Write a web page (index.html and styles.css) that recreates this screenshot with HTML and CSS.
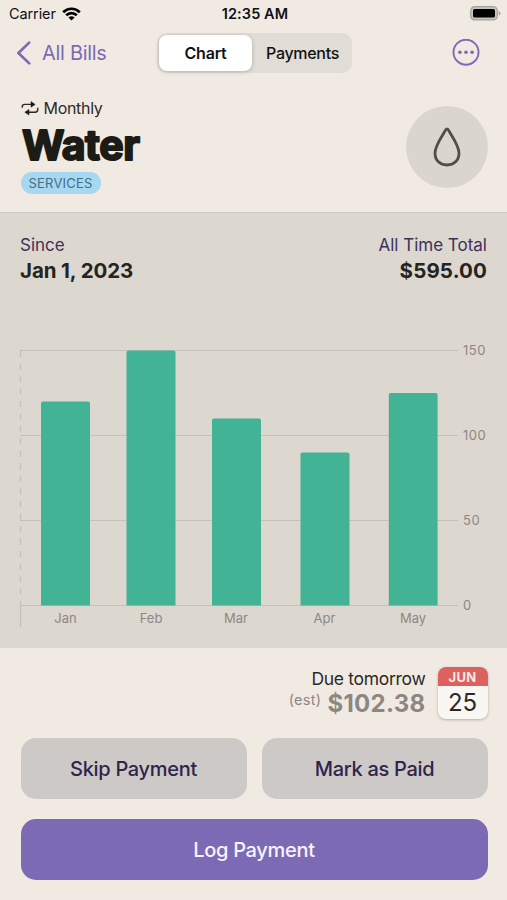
FILE: index.html
```html
<!DOCTYPE html>
<html lang="en">
  <head>
    <meta charset="utf-8" />
    <title>Water</title>
    <link rel="stylesheet" href="styles.css">
  </head>

  <body>
    <div class="status-bar">
      <div class="carrier">
        <span>Carrier</span>
        <svg width="19" height="14" viewBox="0 0 19 14" fill="none" stroke="#000" stroke-width="2.7">
          <path d="M1.2 5.2 C5.8 0.6 13.2 0.6 17.8 5.2" />
          <path d="M4.2 8.3 C7.2 5.4 11.8 5.4 14.8 8.3" />
          <path d="M6.5 10.5 C8.1 8.9 10.9 8.9 12.5 10.5 L9.5 13.5 Z" fill="#000" stroke="none" />
        </svg>
      </div>
      <span class="time">12:35 AM</span>
      <svg class="battery" width="31" height="15" viewBox="0 0 31 15">
        <rect x="0.7" y="0.7" width="26.6" height="13.2" rx="4" fill="#c9c5bb" stroke="#a5a198" stroke-width="1.2" />
        <rect x="3" y="3" width="22" height="8.6" rx="1.5" fill="#000" />
        <path d="M28.7 5 Q30.4 5.6 30.4 7.3 Q30.4 9 28.7 9.6 Z" fill="#a5a198" />
      </svg>
    </div>

    <div class="nav">
      <a class="back" href="#">
        <svg width="15" height="24" viewBox="0 0 15 24" fill="none" stroke="#7c6ab5" stroke-width="2.7" stroke-linecap="round" stroke-linejoin="round">
          <path d="M13.2 1.6 L2.4 12 L13.2 22.4" />
        </svg>
        <span>All Bills</span>
      </a>
      <div class="segments">
        <div class="segment active">Chart</div>
        <div class="segment">Payments</div>
      </div>
      <svg class="more" width="28" height="28" viewBox="0 0 28 28">
        <circle cx="14" cy="13.2" r="12.5" fill="none" stroke="#7c6ab5" stroke-width="1.9" />
        <g fill="#7c6ab5">
          <circle cx="7.9" cy="13.2" r="1.8" />
          <circle cx="14" cy="13.2" r="1.8" />
          <circle cx="20.1" cy="13.2" r="1.8" />
        </g>
      </svg>
    </div>

    <div class="bill">
      <div class="bill-info">
        <div class="repeat">
          <svg width="18" height="15" viewBox="0 0 18 15">
            <g fill="none" stroke="#2c2a26" stroke-width="1.4" stroke-linecap="round">
              <path d="M1.2 6.3 V6 Q1.2 3.4 3.8 3.4 H10.5" />
              <path d="M16.8 7.2 V8.2 Q16.8 11.2 14 11.2 H7" />
            </g>
            <path d="M10 0.6 L14.2 3.4 L10 6.2 Z M8 8.4 L3.8 11.2 L8 14 Z" fill="#1c1b18" stroke="#1c1b18" stroke-width="0.5" stroke-linejoin="round" />
          </svg>
          <span>Monthly</span>
        </div>
        <h1>
          <svg class="title" width="130" height="53">
            <text x="1" y="41" textLength="118" lengthAdjust="spacing">Water</text>
          </svg>
        </h1>
        <div class="tag">SERVICES</div>
      </div>
      <div class="bill-icon">
        <svg width="28" height="40" viewBox="0 0 28 40" fill="none" stroke="#504e49" stroke-width="2.8" stroke-linejoin="round">
          <path d="M14 2 C12.9 2 12.4 3.3 11.6 4.8 C7.2 12 2 19.5 2 26.3 C2 33.4 7 38 14 38 C21 38 26 33.4 26 26.3 C26 19.5 20.8 12 16.4 4.8 C15.6 3.3 15.1 2 14 2 Z" />
        </svg>
      </div>
    </div>

    <div class="stats">
      <div class="totals">
        <div>
          <div class="label">Since</div>
          <div class="value since">Jan 1, 2023</div>
        </div>
        <div class="right">
          <div class="label">All Time Total</div>
          <div class="value">$595.00</div>
        </div>
      </div>

      <svg class="chart" width="507" height="290" viewBox="0 340 507 290">
        <g stroke="#c5c0b8" stroke-width="1.2">
          <path d="M20 350.5 H458 M20 435.5 H458 M20 520.5 H458 M20 605.5 H458" />
          <path d="M20.5 351 V605" stroke-dasharray="6 6.5" />
          <path d="M20.5 605 V627" />
        </g>
        <g fill="#43b395">
          <path d="M41 605.5 V403.5 Q41 401.5 43 401.5 H88 Q90 401.5 90 403.5 V605.5 Z" />
          <path d="M126.5 605.5 V352.5 Q126.5 350.5 128.5 350.5 H173.5 Q175.5 350.5 175.5 352.5 V605.5 Z" />
          <path d="M212 605.5 V420.5 Q212 418.5 214 418.5 H259 Q261 418.5 261 420.5 V605.5 Z" />
          <path d="M300.5 605.5 V454.5 Q300.5 452.5 302.5 452.5 H347.5 Q349.5 452.5 349.5 454.5 V605.5 Z" />
          <path d="M388.8 605.5 V395 Q388.8 393 390.8 393 H435.6 Q437.6 393 437.6 395 V605.5 Z" />
        </g>
        <g class="months">
          <text x="65.5" y="623">Jan</text>
          <text x="151" y="623">Feb</text>
          <text x="236" y="623">Mar</text>
          <text x="324.5" y="623">Apr</text>
          <text x="413" y="623">May</text>
        </g>
        <g class="amounts">
          <text x="463" y="355">150</text>
          <text x="463" y="440">100</text>
          <text x="463" y="525">50</text>
          <text x="463" y="610">0</text>
        </g>
      </svg>
    </div>

    <div class="footer">
      <div class="due">
        <div class="due-text">
          <div class="due-when">Due tomorrow</div>
          <div class="due-amount">
            <span class="est">(est)</span>
            <span class="amount">$102.38</span>
          </div>
        </div>
        <div class="calendar">
          <div class="month">JUN</div>
          <div class="day">25</div>
        </div>
      </div>
      <div class="buttons">
        <button class="button">Skip Payment</button>
        <button class="button">Mark as Paid</button>
        <button class="button primary">Log Payment</button>
      </div>
    </div>
  </body>
</html>
```
FILE: styles.css
```css
* {
  box-sizing: border-box;
}

body {
  margin: 0;
  width: 507px;
  height: 900px;
  overflow: hidden;
  display: flex;
  flex-direction: column;
  font-family: Inter, "Liberation Sans", sans-serif;
  color: #2c2a26;
  background-color: #f1eae3;
  white-space: nowrap;
}

.status-bar {
  height: 27px;
  padding: 0 6px 0 9px;
  display: grid;
  grid-template-columns: 1fr auto 1fr;
  align-items: center;
  font-size: 14.5px;
  color: #111;
}

.carrier {
  display: flex;
  align-items: center;
  gap: 6px;
  letter-spacing: -0.1px;
}

.time {
  font-weight: 600;
  letter-spacing: 0.1px;
}

.battery {
  justify-self: end;
}

.nav {
  height: 52px;
  padding: 0 27px 0 16px;
  display: grid;
  grid-template-columns: 141px 195px 1fr;
  align-items: center;
}

.back {
  display: flex;
  align-items: center;
  gap: 11px;
  font-size: 20px;
  letter-spacing: -0.3px;
  color: #7c6ab5;
  text-decoration: none;
}

.segments {
  height: 40px;
  padding: 2px;
  display: grid;
  grid-template-columns: 93px 1fr;
  border-radius: 10px;
  background-color: #e1dcd6;
}

.segment {
  padding-left: 3px;
  display: flex;
  align-items: center;
  justify-content: center;
  font-size: 16px;
  font-weight: 500;
  letter-spacing: -0.3px;
  color: #111;
}

.segment.active {
  padding-left: 0;
  font-weight: 600;
  letter-spacing: -0.2px;
  border-radius: 8px;
  background-color: #fff;
  box-shadow: 0 1px 4px rgba(0, 0, 0, 0.2);
}

.more {
  justify-self: end;
}

.bill {
  height: 133px;
  padding: 18px 19.5px 0 20.5px;
  display: flex;
  justify-content: space-between;
}

.repeat {
  height: 22px;
  display: flex;
  align-items: center;
  gap: 5px;
  font-size: 16px;
  letter-spacing: -0.3px;
}

.bill h1 {
  margin: 0;
  height: 53px;
}

.title {
  display: block;
}

/* round joins soften the corners of the heading letters */
.title text {
  font-size: 41px;
  font-weight: 700;
  fill: #1c1b15;
  stroke: #1c1b15;
  stroke-width: 2px;
  stroke-linejoin: round;
}

.tag {
  width: 80px;
  height: 22px;
  border-radius: 11px;
  font-size: 13px;
  line-height: 22px;
  letter-spacing: 0.2px;
  text-align: center;
  color: #426f87;
  background-color: #a6d8f1;
}

.bill-icon {
  width: 82px;
  height: 82px;
  margin-top: 9px;
  display: flex;
  align-items: center;
  justify-content: center;
  border-radius: 50%;
  background-color: #dad5cf;
}

.stats {
  height: 436px;
  border-top: 1px solid #d0cbc4;
  background-color: #dcd7cf;
}

.totals {
  height: 127px;
  padding: 19px 20px 0;
  display: flex;
  justify-content: space-between;
}

.right {
  text-align: right;
}

.label {
  font-size: 17px;
  line-height: 26px;
  color: #3c315c;
}

.value {
  font-size: 20.5px;
  line-height: 26px;
  font-weight: 700;
  letter-spacing: 0.15px;
  color: #25241f;
}

.value.since {
  letter-spacing: -0.1px;
}

.chart {
  display: block;
}

.chart text {
  font-size: 13px;
  fill: #8c8881;
}

.amounts text {
  letter-spacing: 0.5px;
}

.months {
  text-anchor: middle;
}

.footer {
  flex: 1;
  padding: 18px 19.5px 0 20.5px;
}

.due {
  display: flex;
  justify-content: flex-end;
  gap: 12px;
}

.due-text {
  text-align: right;
}

.due-when {
  font-size: 17.5px;
  line-height: 25px;
  letter-spacing: -0.3px;
}

.due-amount {
  display: flex;
  justify-content: flex-end;
  gap: 6px;
  color: #8b8781;
}

.est {
  font-size: 14.5px;
  line-height: 17px;
  letter-spacing: 0.3px;
}

.amount {
  font-size: 24px;
  line-height: 26px;
  font-weight: 700;
  letter-spacing: 0.3px;
}

.calendar {
  width: 50px;
  height: 52px;
  margin-top: 1px;
  overflow: hidden;
  border-radius: 8px;
  text-align: center;
  background-color: #faf7f2;
  box-shadow: 0 1px 3px rgba(0, 0, 0, 0.25);
}

.month {
  height: 19px;
  font-size: 13px;
  line-height: 20px;
  font-weight: 700;
  letter-spacing: 0.3px;
  color: #fbe9e4;
  background-color: #dd625f;
}

.day {
  font-size: 24px;
  line-height: 33px;
}

.buttons {
  margin-top: 19px;
  display: grid;
  grid-template-columns: 1fr 1fr;
  gap: 20px 15px;
}

.button {
  height: 61px;
  padding: 0;
  border: none;
  border-radius: 15px;
  font-family: inherit;
  font-size: 20px;
  font-weight: 500;
  letter-spacing: -0.3px;
  color: #2e244d;
  background-color: #cdc9c7;
}

.button.primary {
  grid-column: span 2;
  color: #f8f3ff;
  background-color: #7c6ab5;
}
```
